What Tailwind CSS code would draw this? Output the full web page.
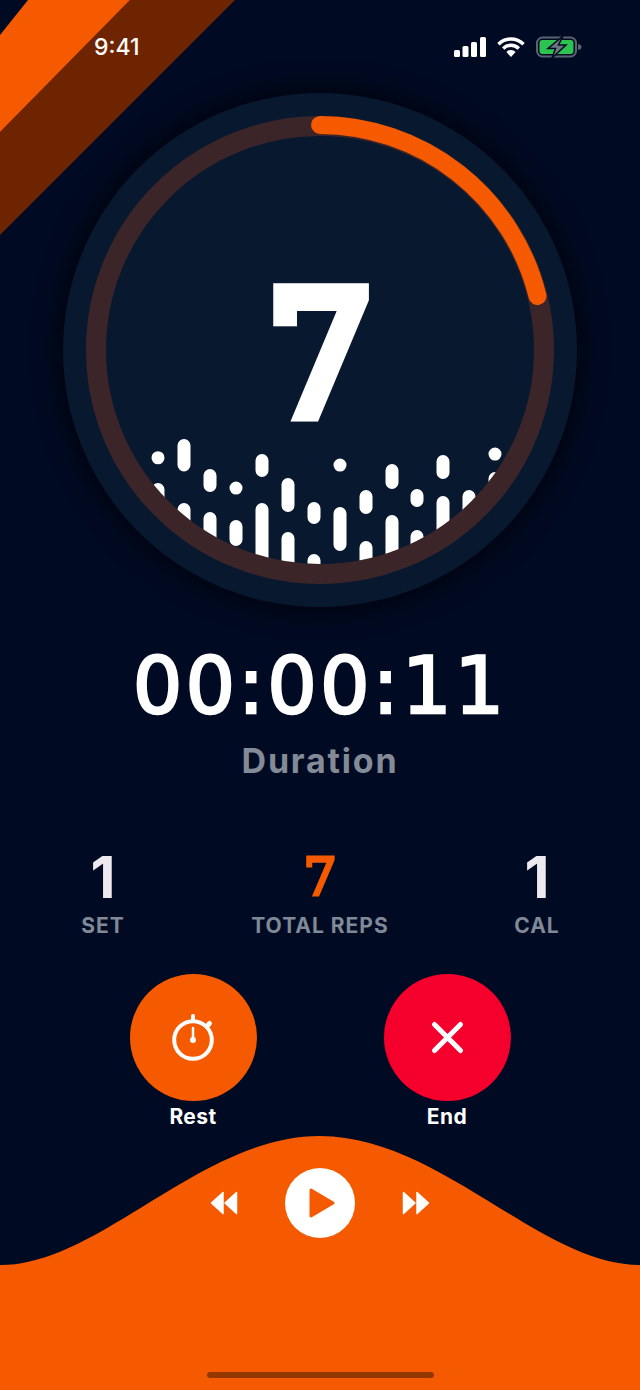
<!DOCTYPE html>
<html lang="en">
<head>
  <meta charset="UTF-8">
  <meta name="viewport" content="width=device-width, initial-scale=1.0">
  <title>Workout Timer</title>
  <script src="https://cdn.jsdelivr.net/npm/@tailwindcss/browser@4"></script>
</head>
<body class="bg-[#000a22]">
  <div class="relative flex flex-col w-[640px] h-[1390px] overflow-hidden bg-[#000a22] text-white font-['Inter',sans-serif]">

    <!-- Corner stripes -->
    <svg class="absolute top-0 left-0" width="240" height="240" viewBox="0 0 240 240">
      <polygon points="130,0 235,0 0,235 0,132" fill="#6f2400"/>
      <polygon points="28,0 130,0 0,132 0,35" fill="#f55a00"/>
    </svg>

    <!-- Status bar -->
    <header class="relative flex justify-between items-center h-[94px] pl-[94px] pr-[58px]">
      <span class="text-[23px] font-medium">9:41</span>
      <div class="flex items-center gap-[11px]">
        <svg width="32" height="20" viewBox="0 0 32 20" fill="#fff">
          <rect x="0" y="13" width="6" height="7" rx="1.5"/>
          <rect x="8.5" y="9" width="6" height="11" rx="1.5"/>
          <rect x="17" y="5" width="6" height="15" rx="1.5"/>
          <rect x="26" y="0" width="6" height="20" rx="1.5"/>
        </svg>
        <svg width="28" height="20" viewBox="0 0 28 20" fill="none" stroke="#fff" stroke-width="3.5">
          <path d="M1.5 7.2a17.5 17.5 0 0 1 25 0"/>
          <path d="M6.2 11.5a11 11 0 0 1 15.6 0"/>
          <path d="M14 20l-4.6-5a6.4 6.4 0 0 1 9.2 0z" fill="#fff" stroke="none"/>
        </svg>
        <svg width="46" height="22" viewBox="0 0 46 22">
          <rect x="1" y="1.500" width="39" height="19" rx="5.5" fill="none" stroke="#5c6370" stroke-width="2"/>
          <rect x="3.5" y="4" width="34" height="14" rx="3" fill="#2cc350"/>
          <path d="M42 8c2.5.4 3.500 1.500 3.500 3s-1 2.600-3.500 3z" fill="#5c6370"/>
          <path d="M27 0L12 12.500h7.500L16 22l14-13h-7.500z" fill="#6d7480" stroke="#000a22" stroke-width="1.500"/>
        </svg>
      </div>
    </header>

    <!-- Rep dial -->
    <section class="relative self-center w-[514px] h-[514px] -mt-[1px] rounded-full bg-[#07182f] shadow-[0_0_22px_8px_rgba(0,0,0,0.5)]">
      <svg class="absolute inset-0" width="514" height="514" viewBox="0 0 514 514">
        <defs>
          <clipPath id="dial"><circle cx="257" cy="257" r="220"/></clipPath>
        </defs>
        <g clip-path="url(#dial)">
          <g stroke="#fff" stroke-width="13" stroke-linecap="round" fill="none" transform="translate(-63 -93)">
            <path d="M158 457.700v.1M158 489.500V560"/>
            <path d="M184 445.500v19.500M184 509.500V580"/>
            <path d="M210 475.500v10M210 518.500V580"/>
            <path d="M236 488v.1M236 526.500v13"/>
            <path d="M262 460.500v10M262 509.500V590"/>
            <path d="M288 484.500v21M288 538.500V590"/>
            <path d="M314 508.500v9M314 560.500V600"/>
            <path d="M340 465v.1M340 513.500v31"/>
            <path d="M366 496.500v11M366 547.500V590"/>
            <path d="M392 470.500v12M392 521.500V590"/>
            <path d="M417 495.500v5M417 536.500V590"/>
            <path d="M443 461.500v11M443 502.500V580"/>
            <path d="M469 496.500V570"/>
            <path d="M495 454v.1M495 478.500V560"/>
          </g>
        </g>
        <circle cx="257" cy="257" r="224" fill="none" stroke="#3c2529" stroke-width="20"/>
        <path d="M257 32A225 225 0 0 1 474.500 203" fill="none" stroke="#f55a00" stroke-width="18" stroke-linecap="round"/>
      </svg>
      <span class="absolute left-0 right-0 top-[168px] text-center text-[170px] leading-[190px] [-webkit-text-stroke:14px_white] font-['DejaVu_Serif',serif]">7</span>
    </section>

    <!-- Duration -->
    <div class="flex flex-col items-center mt-[29px]">
      <div class="text-[78px] leading-[100px] tracking-[3px] [-webkit-text-stroke:2.5px_white] font-['DejaVu_Sans',sans-serif]">00:00:11</div>
      <div class="mt-[3px] text-[34px] leading-[44px] font-bold tracking-[1.8px] text-[#838b97]">Duration</div>
    </div>

    <!-- Stats -->
    <div class="grid grid-cols-[repeat(3,200px)] justify-center gap-x-[17px] mt-[64px] text-center">
      <div>
        <div class="text-[58px] leading-[60px] font-bold text-[#eceaee]">1</div>
        <div class="mt-[6px] text-[21px] leading-[26px] font-bold tracking-[1px] text-[#7f8997]">SET</div>
      </div>
      <div>
        <div class="text-[53px] leading-[60px] [-webkit-text-stroke:3px_#f55a00] text-[#f55a00] font-['DejaVu_Serif',serif]">7</div>
        <div class="mt-[6px] text-[21px] leading-[26px] font-bold tracking-[1px] text-[#7f8997]">TOTAL REPS</div>
      </div>
      <div>
        <div class="text-[58px] leading-[60px] font-bold text-[#eceaee]">1</div>
        <div class="mt-[6px] text-[21px] leading-[26px] font-bold tracking-[1px] text-[#7f8997]">CAL</div>
      </div>
    </div>

    <!-- Actions -->
    <div class="flex justify-center gap-[127px] mt-[35px]">
      <div class="flex flex-col items-center w-[127px]">
        <div class="w-[127px] h-[127px] rounded-full bg-[#f55a00]">
          <svg width="127" height="127" viewBox="0 0 127 127" fill="none" stroke="#fff" stroke-width="4" stroke-linecap="round">
            <circle cx="63" cy="66" r="18.800"/>
            <path d="M63 42v4"/>
            <path d="M78.500 50.500l1-1" stroke-width="5"/>
            <path d="M63 54v12" stroke-width="2.500"/>
            <circle cx="63" cy="66" r="3" fill="#fff" stroke="none"/>
          </svg>
        </div>
        <span class="mt-[2px] text-[21px] leading-[28px] font-bold tracking-[0.4px]">Rest</span>
      </div>
      <div class="flex flex-col items-center w-[127px]">
        <div class="w-[127px] h-[127px] rounded-full bg-[#f5002d]">
          <svg width="127" height="127" viewBox="0 0 127 127" fill="none" stroke="#fff" stroke-width="5" stroke-linecap="round">
            <path d="M50.500 50.500l26 26M76.500 50.500l-26 26"/>
          </svg>
        </div>
        <span class="mt-[2px] text-[21px] leading-[28px] font-bold tracking-[0.4px]">End</span>
      </div>
    </div>

    <!-- Player -->
    <footer class="relative mt-auto h-[254px]">
      <svg class="absolute inset-0" width="640" height="254" viewBox="0 0 640 254">
        <path d="M0 129C100 129 200 0 320 0S540 129 640 129V254H0z" fill="#f55a00"/>
      </svg>
      <div class="relative flex justify-center items-center gap-[47px] pt-[32px]">
        <svg width="28" height="26" viewBox="0 0 28 26" fill="#fff" stroke="#fff" stroke-width="1.500" stroke-linejoin="round">
          <path d="M13 2.500L1.500 13 13 23.500zM26.500 2.500L15 13l11.500 10.500z"/>
        </svg>
        <div class="flex items-center justify-center w-[70px] h-[70px] rounded-full bg-white">
          <svg class="ml-[3px]" width="26" height="30" viewBox="0 0 26 30" fill="#f55a00" stroke="#f55a00" stroke-width="3" stroke-linejoin="round">
            <path d="M2 2l22 13L2 28z"/>
          </svg>
        </div>
        <svg width="28" height="26" viewBox="0 0 28 26" fill="#fff" stroke="#fff" stroke-width="1.500" stroke-linejoin="round">
          <path d="M1.500 2.500L13 13 1.500 23.500zM15 2.500L26.500 13 15 23.500z"/>
        </svg>
      </div>
      <div class="absolute bottom-[12px] left-[207px] w-[227px] h-[6px] rounded-full bg-black/40"></div>
    </footer>
  </div>
</body>
</html>
